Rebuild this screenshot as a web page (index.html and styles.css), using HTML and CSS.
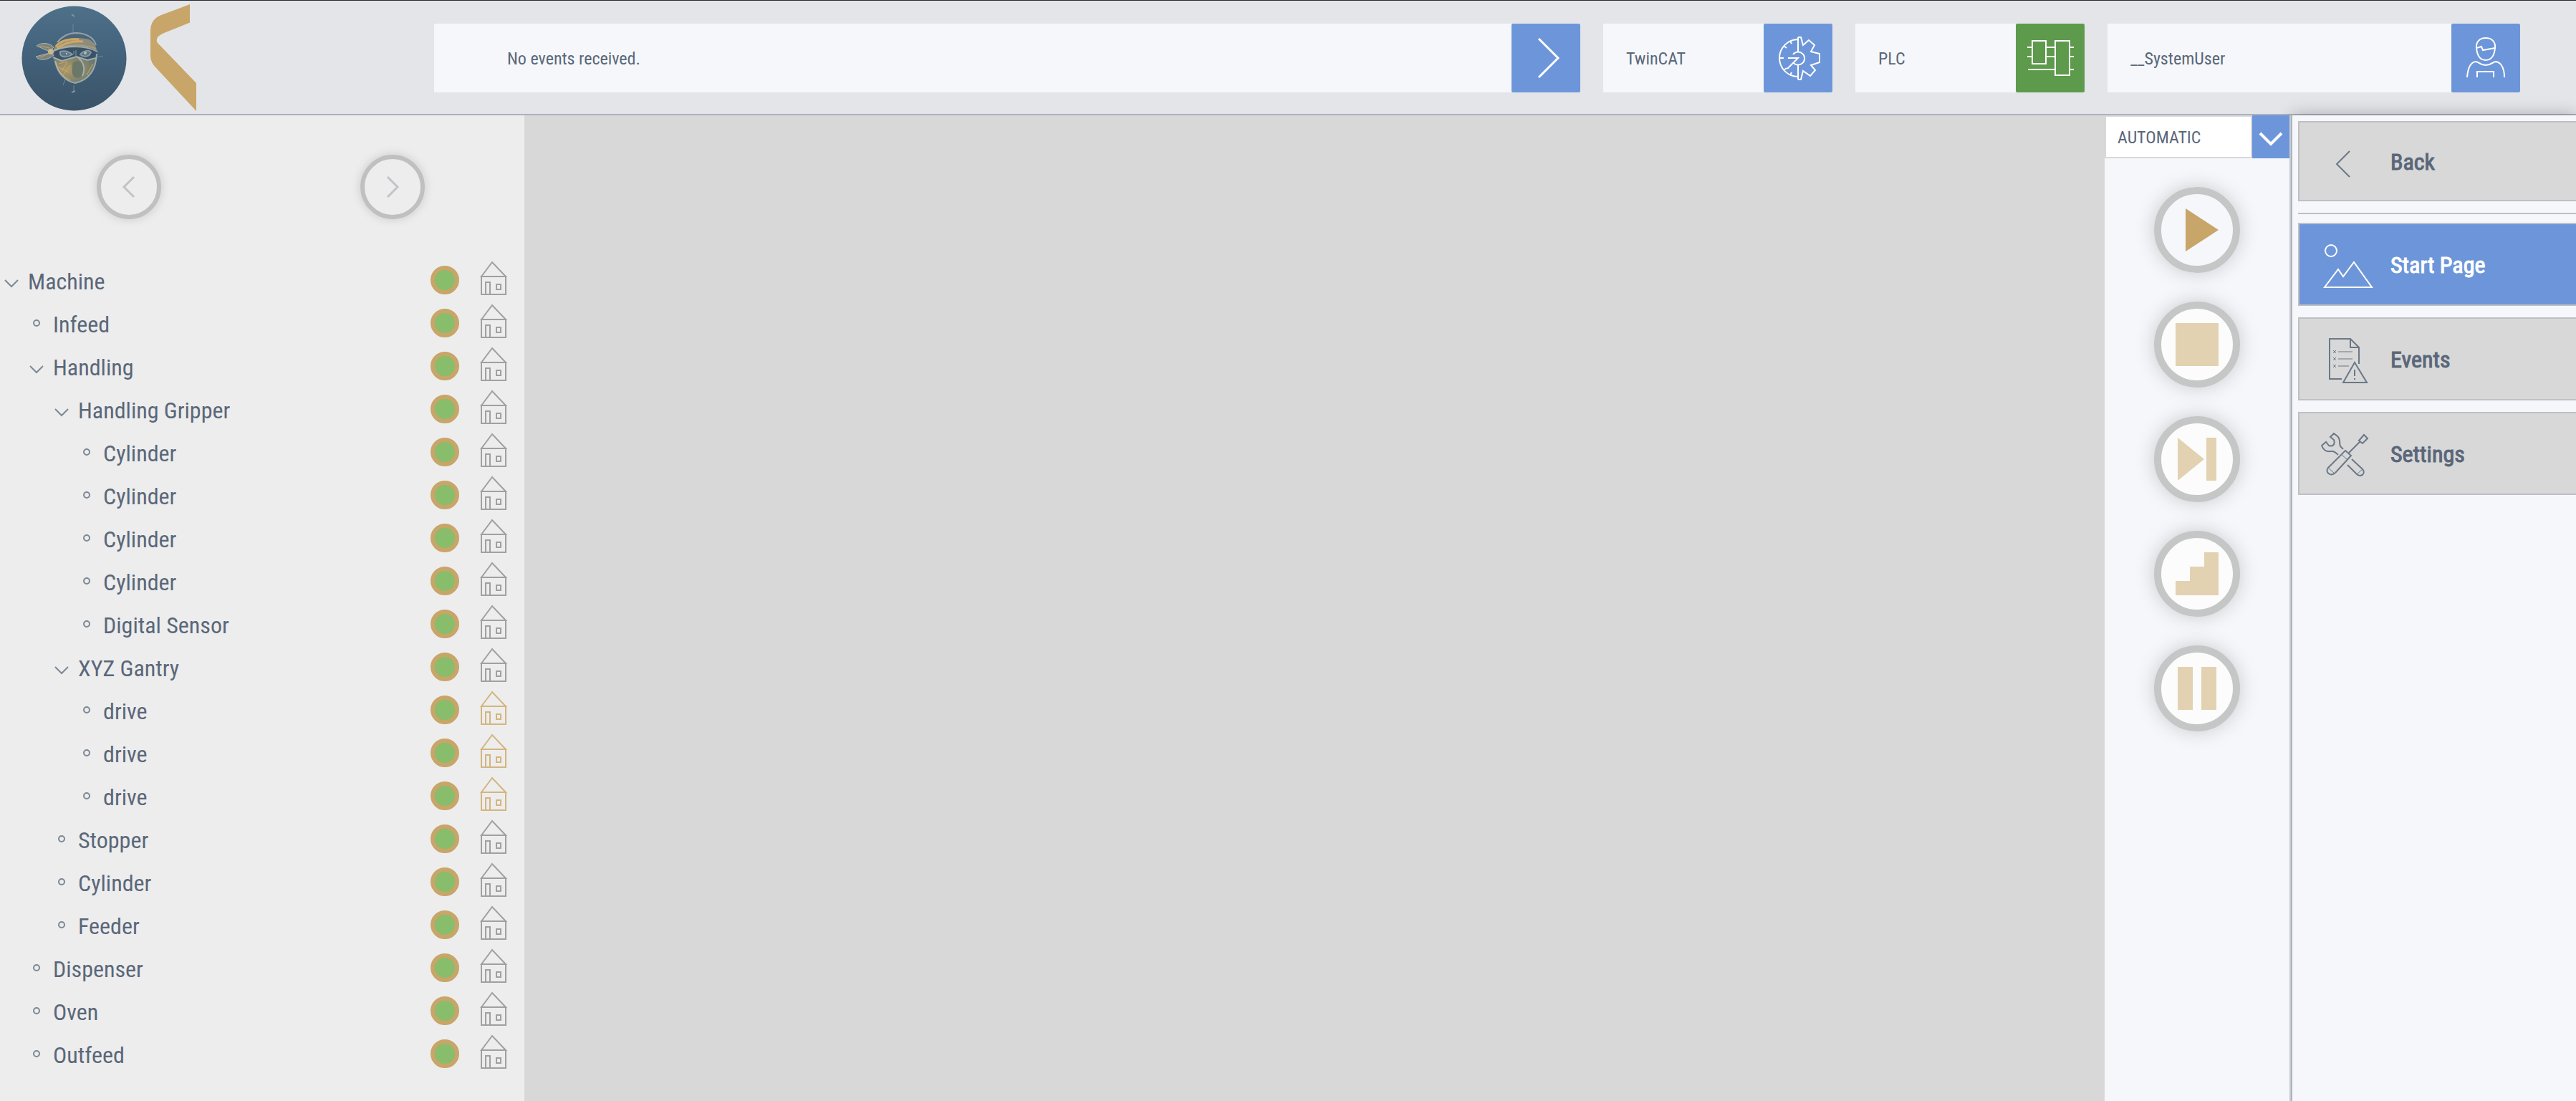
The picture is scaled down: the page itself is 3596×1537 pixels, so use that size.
FILE: index.html
```html
<!DOCTYPE html>
<html lang="en">
<head>
  <meta charset="UTF-8" />
  <meta name="viewport" content="width=device-width, initial-scale=1.0" />
  <title>Machine HMI</title>
  <link rel="stylesheet" href="styles.css">
</head>
<body>
  <header class="header">
    <div class="logos">
      <svg class="ninja" viewBox="30 7 147 147">
        <defs>
          <linearGradient id="disc" x1="0" y1="0" x2="0" y2="1">
            <stop offset="0" stop-color="#4f7089" />
            <stop offset="0.5" stop-color="#42617a" />
            <stop offset="1" stop-color="#3a5368" />
          </linearGradient>
          <radialGradient id="mask" cx="0.35" cy="0.5" r="0.7">
            <stop offset="0" stop-color="#b09a68" />
            <stop offset="1" stop-color="#66776f" />
          </radialGradient>
        </defs>
        <circle cx="103.500" cy="80.500" r="73" fill="url(#disc)" />
        <path d="M102 33v15M88 118l3-8M103 118v10M136 79l8-2" stroke="#6d8799" stroke-width="1" fill="none" />
        <path d="M100 19l4 3M100 128l5-2" stroke="#7d95a5" stroke-width="2" fill="none" />
        <!-- head -->
        <path d="M75 66C79 50 93 45 107 45C124 46 134 54 136 70C136 93 129 108 105 115C87 112 76 99 73 80Z" fill="#4c6475" />
        <path d="M80 58C88 48 98 45 107 45C122 46 131 52 134 62" stroke="#8fa3ae" stroke-width="2" fill="none" />
        <path d="M75 67C82 54 100 49 124 54C131 57 134 62 135 69C116 62 93 62 75 70Z" fill="#8d8d7d" />
        <path d="M78 64C84 56 96 53 110 54M80 66C90 59 102 56 116 57" stroke="#cda865" stroke-width="3" fill="none" />
        <path d="M76 69C92 60 116 60 134 67" stroke="#b9a57d" stroke-width="1" fill="none" />
        <!-- eyes -->
        <path d="M76 70C95 64 117 64 135 71V79L122 81L107 77L88 83L76 79Z" fill="#3b5164" />
        <path d="M84 71C90 69 96 71 101 75C95 79 87 80 84 75ZM112 75C116 70 124 68 127 72C125 78 117 80 112 75Z" stroke="#8299a8" stroke-width="2" fill="#5c7688" />
        <circle cx="93" cy="74" r="1" fill="#d2dade" />
        <circle cx="119" cy="73" r="2" fill="#c5b891" />
        <path d="M106 69V77M103 70V75" stroke="#8299a8" stroke-width="1" fill="none" />
        <!-- scarf -->
        <path d="M75 79L86 84L107 78L122 83L134 80C133 100 122 111 105 114C90 112 79 101 75 79Z" fill="url(#mask)" />
        <path d="M78 86C80 98 88 106 98 110M82 88L94 85L86 99M88 104L98 90M84 94L96 100M90 96L80 92M130 88L121 104M100 102L108 104" stroke="#c9a764" stroke-width="1" fill="none" />
        <path d="M102 86C112 80 119 90 117 100C114 110 103 110 101 102C100 96 101 90 102 86Z" fill="#6b7768" />
        <path d="M75 70C94 62 118 62 136 71M74 79L86 84L107 78L122 83L134 80M77 84C80 100 90 112 105 115C123 111 134 98 135 74M107 78C116 84 120 94 115 105" stroke="#b4bfc0" stroke-width="2" stroke-opacity="0.75" fill="none" />
        <!-- knot -->
        <path d="M69 71L51 63C57 58 69 58 75 65ZM69 73L50 78C54 84 66 84 75 76Z" fill="#7f8478" stroke="#a9b3b3" stroke-width="1" />
        <path d="M55 63L69 66M55 79L68 74" stroke="#b7a176" stroke-width="1" fill="none" />
        <circle cx="71" cy="71" r="4" fill="#c9b78f" />
      </svg>
      <svg class="mark" viewBox="208 4 68 154">
        <path d="M265 6V31.500L229 46Q215 52 220 60L274 116V155L220 97Q210 88 210 78V42Q211 26 225 21Z" fill="#c8a568" />
      </svg>
    </div>

    <div class="field events">
      <span class="field-text">No events received.</span>
      <button class="field-btn" aria-label="Show events">
        <svg viewBox="0 0 96 96"><path d="M38 21L65 48L38 75" stroke-width="3" /></svg>
      </button>
    </div>
    <div class="field small">
      <span class="field-text">TwinCAT</span>
      <button class="field-btn" aria-label="TwinCAT state">
        <svg viewBox="0 0 96 96">
          <path d="M48 22A26 26 0 0 0 48 74M48 19V39M48 58V78M48 19H52L55 30L63 23L71 30L66 39L78 42V54L66 58L72 65L65 73L55 66L52 78H48M41 43A9 9 0 1 1 41 54M34 48H48L33 63M23 48H28M28 31L32 34M28 65L32 62M37 24L39 28M37 72L39 68" />
        </svg>
      </button>
    </div>
    <div class="field small">
      <span class="field-text">PLC</span>
      <button class="field-btn running" aria-label="PLC state">
        <svg viewBox="0 0 96 96">
          <path d="M23 24H42V56H23ZM55 24H75V72H55ZM16 33H23M42 33H55M75 33H81M16 46H23M42 46H55M75 46H81M17 64H55M75 64H81" />
        </svg>
      </button>
    </div>
    <div class="field user">
      <span class="field-text">__SystemUser</span>
      <button class="field-btn" aria-label="User">
        <svg viewBox="0 0 96 96">
          <path d="M35 34C34 25 40 20 48 20C56 20 62 25 61 34C60 44 57 51 48 51C39 51 36 44 35 34L42 32L44 37L61 34M22 75C23 62 26 54 34 53C38 53 40 58 48 58C56 58 58 53 62 53C70 54 74 63 74 75M36 75V67H59V75" />
        </svg>
      </button>
    </div>
  </header>

  <div class="layout">
    <aside class="sidebar">
      <div class="history">
        <button class="round-nav" aria-label="Previous"><svg viewBox="0 0 78 78"><path d="M46 25L32 39L46 53" /></svg></button>
        <button class="round-nav" aria-label="Next"><svg viewBox="0 0 78 78"><path d="M32 25L46 39L32 53" /></svg></button>
      </div>
      <ul class="tree" id="tree"></ul>
    </aside>

    <main class="content"></main>

    <section class="controls">
      <div class="mode">
        <select class="mode-select" aria-label="Operation mode">
          <option>AUTOMATIC</option>
        </select>
        <span class="mode-arrow"><svg viewBox="0 0 52 60"><path d="M11 25L26 40L41 25" /></svg></span>
      </div>
      <div class="actions">
        <button class="action" aria-label="Start"><svg viewBox="0 0 100 100"><path d="M34 20L80 50L34 80Z" /></svg></button>
        <button class="action" aria-label="Stop" disabled><svg viewBox="0 0 100 100"><path d="M20 20H80V80H20Z" /></svg></button>
        <button class="action" aria-label="Step end" disabled><svg viewBox="0 0 100 100"><path d="M23 20L60 50L23 80ZM63 20H77V80H63Z" /></svg></button>
        <button class="action" aria-label="Single step" disabled><svg viewBox="0 0 100 100"><path d="M20 80V60H40V40H60V20H80V80Z" /></svg></button>
        <button class="action" aria-label="Pause" disabled><svg viewBox="0 0 100 100"><path d="M23 20H44V80H23ZM56 20H77V80H56Z" /></svg></button>
      </div>
    </section>

    <nav class="menu">
      <button class="menu-item back">
        <svg viewBox="0 0 84 84"><path d="M44 27L26 45L44 63" /></svg>
        Back
      </button>
      <hr class="menu-line">
      <button class="menu-item active">
        <svg viewBox="0 0 84 84"><circle cx="18" cy="22" r="8" /><path d="M9 73L28 48L35 58L50 38L75 73Z" /></svg>
        Start Page
      </button>
      <button class="menu-item">
        <svg viewBox="0 0 84 84">
          <path d="M33 69H16V13H45L57 25V48M45 13V25H57M51 46L35 74H68ZM51 56V65M51 68V70" />
          <path class="thin" d="M28 31H48M28 41H48M28 51H43M21 29L25 33M25 29L21 33M21 39L25 43M25 39L21 43M21 49L25 53M25 49L21 53" />
        </svg>
        Events
      </button>
      <button class="menu-item">
        <svg viewBox="0 0 84 84">
          <path d="M38 37L46 44L24 68C17 74 9 67 14 61ZM43 40L58 25M57 23L64 15L69 20L62 27ZM35 35L31 31C29 26 32 22 27 17L22 13L17 18L22 22C24 28 21 32 15 30L11 25L5 30C9 40 15 38 20 38C24 38 25 41 28 43M47 49L62 63C67 69 60 75 54 70L41 57" />
          <path class="thin" d="M33 43L40 49M14 61L23 69M62 63L54 70" />
        </svg>
        Settings
      </button>
    </nav>
  </div>

  <script>
    // level, name, has children, home icon highlighted
    const nodes = [
      [0, 'Machine', true],
      [1, 'Infeed'],
      [1, 'Handling', true],
      [2, 'Handling Gripper', true],
      [3, 'Cylinder'],
      [3, 'Cylinder'],
      [3, 'Cylinder'],
      [3, 'Cylinder'],
      [3, 'Digital Sensor'],
      [2, 'XYZ Gantry', true],
      [3, 'drive', false, true],
      [3, 'drive', false, true],
      [3, 'drive', false, true],
      [2, 'Stopper'],
      [2, 'Cylinder'],
      [2, 'Feeder'],
      [1, 'Dispenser'],
      [1, 'Oven'],
      [1, 'Outfeed']
    ];

    const house = '<path d="M4 25L19 5L38 25ZM4 25H38V50H4ZM10 50V33H16V50M25 36H31V43H25Z" />';

    document.getElementById('tree').innerHTML = nodes.map(([level, name, open, home]) => `
      <li class="node" style="padding-left:${level * 35}px">
        ${open
          ? '<button class="toggle" aria-label="Collapse"><svg viewBox="0 0 32 60"><path d="M7 30L16 39L25 30" /></svg></button>'
          : '<span class="toggle"><svg viewBox="0 0 32 60"><circle cx="16" cy="30" r="4" /></svg></span>'}
        <span class="node-name">${name}</span>
        <span class="status"></span>
        <svg class="house${home ? ' homing' : ''}" viewBox="0 0 42 60">${house}</svg>
      </li>`).join('');
  </script>
</body>
</html>
```
FILE: styles.css
```css
* {
  box-sizing: border-box;
}
body {
  margin: 0;
  min-height: 100vh;
  display: flex;
  flex-direction: column;
  background-color: #d8d8d8;
  color: #5a6779;
  font-family: "Roboto Condensed", "Liberation Sans Narrow", Roboto, sans-serif;
  font-size: 32px;
}
button, select {
  font: inherit;
  color: inherit;
  padding: 0;
  border: none;
  background: none;
  cursor: pointer;
}
svg {
  display: block;
  fill: none;
  stroke: currentColor;
  stroke-width: 2;
}

/* header */
.header {
  display: flex;
  align-items: center;
  gap: 32px;
  height: 161px;
  padding: 2px 78px 0 0;
  background-color: #e4e5e9;
  border-top: 1px solid #2a2a2c;
  border-bottom: 2px solid #abb1bd;
}
.logos {
  display: flex;
  align-items: center;
  gap: 31px;
  width: 574px;
  padding-left: 30px;
}
.logos svg {
  stroke: none;
}
.ninja {
  width: 147px;
  height: 147px;
}
.mark {
  width: 68px;
  height: 154px;
}
.field {
  display: flex;
  align-items: center;
  height: 96px;
  background-color: #f5f7fa;
  font-size: 24px;
}
.field-text {
  flex: 1;
  padding: 2px 0 0 32px;
}
.events {
  flex: 1;
}
.events .field-text {
  padding-left: 102px;
}
.small {
  width: 320px;
}
.user {
  width: 576px;
}
.field-btn {
  width: 96px;
  height: 96px;
  border-radius: 2px;
  background-color: #6d96da;
  color: white;
}
.running {
  background-color: #5e9a4c;
}

.layout {
  flex: 1;
  display: flex;
}

/* tree */
.sidebar {
  width: 732px;
  background-color: #ededed;
}
.history {
  display: flex;
  justify-content: space-between;
  padding: 55px 139px 55px 135px;
}
.round-nav {
  width: 90px;
  height: 90px;
  border: 6px solid #c0c0c0;
  border-radius: 50%;
  color: #c3c3c8;
  box-shadow: 0 0 14px rgba(0, 0, 0, 0.15);
}
.round-nav svg {
  stroke-width: 3;
}
.tree {
  list-style: none;
  margin: 0;
  padding: 0 22px 0 0;
}
.node {
  display: flex;
  align-items: center;
  height: 60px;
}
.toggle {
  width: 32px;
  height: 60px;
  margin-right: 7px;
  color: #7c8896;
}
.node-name {
  flex: 1;
  padding-top: 4px;
}
.status {
  width: 40px;
  height: 40px;
  margin-right: 27px;
  border: 6px solid #c8a568;
  border-radius: 50%;
  background-color: #88bd6b;
}
.house {
  width: 42px;
  height: 60px;
  color: #a0a0a0;
}
.homing {
  color: #d3b57f;
}

.content {
  flex: 1;
}

/* machine controls */
.controls {
  position: relative;
  z-index: 2;
  width: 262px;
  background-color: #f5f7fa;
  border-right: 2px solid #abb3bf;
  box-shadow: inset -2px 0 #c8cacf;
}
.mode {
  display: flex;
  width: 258px;
  height: 60px;
}
.mode-select {
  flex: 1;
  appearance: none;
  padding: 2px 0 0 16px;
  border: 2px solid #d8d8d8;
  border-radius: 0;
  background-color: white;
  font-size: 24px;
}
.mode-arrow {
  width: 52px;
  background-color: #6d96da;
  color: white;
}
.mode-arrow svg {
  stroke-width: 4;
}
.actions {
  display: flex;
  flex-direction: column;
  align-items: center;
  gap: 40px;
  padding: 40px 2px 40px 0;
}
.action {
  width: 120px;
  height: 120px;
  border: 10px solid #c5c7c7;
  border-radius: 50%;
  color: #c8a568;
  box-shadow: 0 0 28px rgba(0, 0, 0, 0.18);
}
.action svg {
  fill: currentColor;
  stroke: none;
}
.action:disabled {
  background-color: #fcfcfc;
  color: #e2d2b1;
}

/* menu */
.menu {
  display: flex;
  flex-direction: column;
  gap: 16px;
  width: 396px;
  padding: 8px 0 0 8px;
  background-color: #f5f7fa;
  box-shadow: 0 0 22px rgba(0, 0, 0, 0.28);
}
.menu-item {
  display: flex;
  align-items: center;
  gap: 17px;
  height: 116px;
  padding: 2px 0 0 26px;
  border: 2px solid #bfc0c4;
  border-right: none;
  background-color: #d8d8d8;
  -webkit-text-stroke: 1px currentColor;
}
.menu-item svg {
  width: 84px;
  height: 84px;
  color: #6b7887;
}
.menu-item .thin {
  stroke-width: 1;
}
.back {
  height: 112px;
}
.menu-line {
  width: 100%;
  margin: 0 0 -4px;
  border: none;
  border-top: 2px solid #bfc0c4;
}
.active {
  background-color: #6d96da;
  color: white;
}
.active svg {
  color: white;
}
```
